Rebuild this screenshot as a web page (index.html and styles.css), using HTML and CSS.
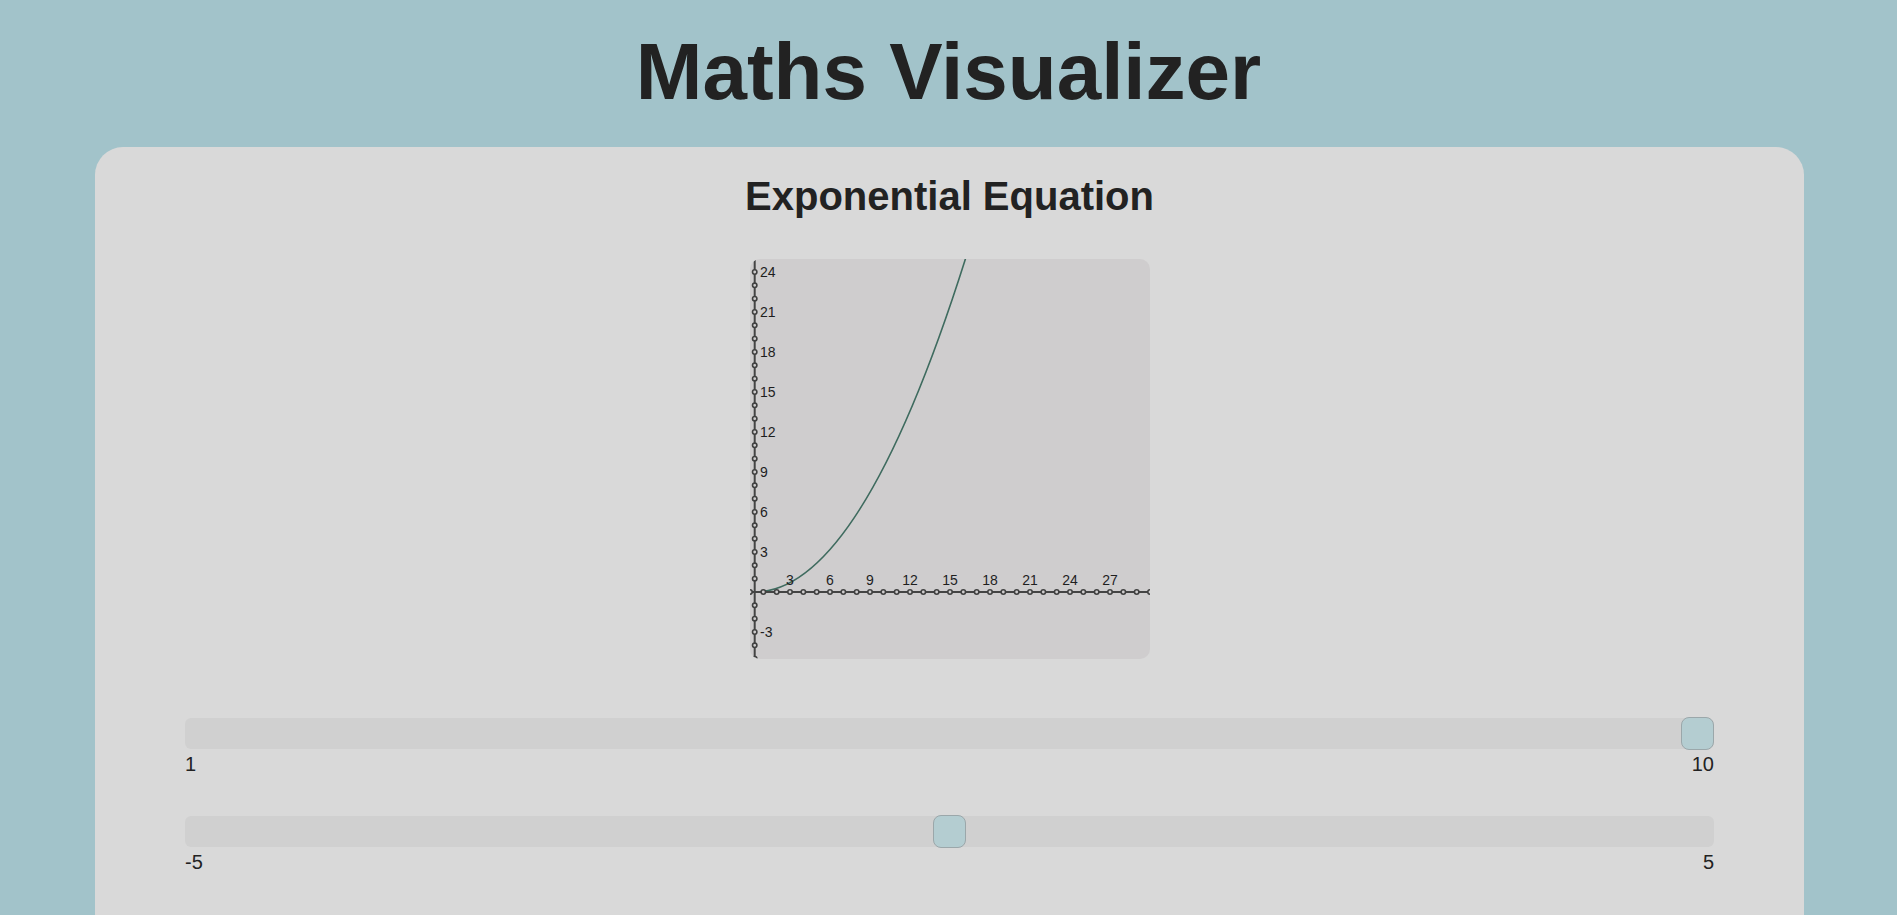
FILE: index.html
```html
<!DOCTYPE html>
<html lang="en">
<head>
<meta charset="utf-8">
<title>Maths Visualizer</title>
<link rel="stylesheet" href="styles.css">
</head>
<body>
<h1 class="title">Maths Visualizer</h1>
<main class="card">
  <h2 class="eq-title">Exponential Equation</h2>
  <div class="graph">
    <svg class="graph-svg" width="400" height="400" viewBox="0 0 400 400">
      <path class="curve" d="M0 333 L4.7 333 Q111.37 333 218.03 -8.33"/>
      <line class="axis" x1="0" y1="333" x2="400" y2="333"/>
      <line class="axis" x1="4.7" y1="0" x2="4.7" y2="400"/>
      <g class="ticks">
        <circle cx="0" cy="333" r="2.2"/><circle cx="13.33" cy="333" r="2.2"/><circle cx="26.67" cy="333" r="2.2"/><circle cx="40" cy="333" r="2.2"/><circle cx="53.33" cy="333" r="2.2"/><circle cx="66.67" cy="333" r="2.2"/><circle cx="80" cy="333" r="2.2"/><circle cx="93.33" cy="333" r="2.2"/><circle cx="106.67" cy="333" r="2.2"/><circle cx="120" cy="333" r="2.2"/><circle cx="133.33" cy="333" r="2.2"/><circle cx="146.67" cy="333" r="2.2"/><circle cx="160" cy="333" r="2.2"/><circle cx="173.33" cy="333" r="2.2"/><circle cx="186.67" cy="333" r="2.2"/><circle cx="200" cy="333" r="2.2"/><circle cx="213.33" cy="333" r="2.2"/><circle cx="226.67" cy="333" r="2.2"/><circle cx="240" cy="333" r="2.2"/><circle cx="253.33" cy="333" r="2.2"/><circle cx="266.67" cy="333" r="2.2"/><circle cx="280" cy="333" r="2.2"/><circle cx="293.33" cy="333" r="2.2"/><circle cx="306.67" cy="333" r="2.2"/><circle cx="320" cy="333" r="2.2"/><circle cx="333.33" cy="333" r="2.2"/><circle cx="346.67" cy="333" r="2.2"/><circle cx="360" cy="333" r="2.2"/><circle cx="373.33" cy="333" r="2.2"/><circle cx="386.67" cy="333" r="2.2"/><circle cx="400" cy="333" r="2.2"/>
        <circle cx="4.7" cy="399.67" r="2.2"/><circle cx="4.7" cy="386.33" r="2.2"/><circle cx="4.7" cy="373" r="2.2"/><circle cx="4.7" cy="359.67" r="2.2"/><circle cx="4.7" cy="346.33" r="2.2"/><circle cx="4.7" cy="319.67" r="2.2"/><circle cx="4.7" cy="306.33" r="2.2"/><circle cx="4.7" cy="293" r="2.2"/><circle cx="4.7" cy="279.67" r="2.2"/><circle cx="4.7" cy="266.33" r="2.2"/><circle cx="4.7" cy="253" r="2.2"/><circle cx="4.7" cy="239.67" r="2.2"/><circle cx="4.7" cy="226.33" r="2.2"/><circle cx="4.7" cy="213" r="2.2"/><circle cx="4.7" cy="199.67" r="2.2"/><circle cx="4.7" cy="186.33" r="2.2"/><circle cx="4.7" cy="173" r="2.2"/><circle cx="4.7" cy="159.67" r="2.2"/><circle cx="4.7" cy="146.33" r="2.2"/><circle cx="4.7" cy="133" r="2.2"/><circle cx="4.7" cy="119.67" r="2.2"/><circle cx="4.7" cy="106.33" r="2.2"/><circle cx="4.7" cy="93" r="2.2"/><circle cx="4.7" cy="79.67" r="2.2"/><circle cx="4.7" cy="66.33" r="2.2"/><circle cx="4.7" cy="53" r="2.2"/><circle cx="4.7" cy="39.67" r="2.2"/><circle cx="4.7" cy="26.33" r="2.2"/><circle cx="4.7" cy="13" r="2.2"/>
      </g>
      <g class="xlabels">
        <text x="40" y="326">3</text><text x="80" y="326">6</text><text x="120" y="326">9</text><text x="160" y="326">12</text><text x="200" y="326">15</text><text x="240" y="326">18</text><text x="280" y="326">21</text><text x="320" y="326">24</text><text x="360" y="326">27</text>
      </g>
      <g class="ylabels">
        <text x="10" y="18">24</text><text x="10" y="58">21</text><text x="10" y="98">18</text><text x="10" y="138">15</text><text x="10" y="178">12</text><text x="10" y="218">9</text><text x="10" y="258">6</text><text x="10" y="298">3</text><text x="10" y="378">-3</text>
      </g>
    </svg>
  </div>

  <div class="control control-first">
    <input class="slider" type="range" min="1" max="10" value="10">
    <div class="range-labels"><span>1</span><span>10</span></div>
  </div>
  <div class="control">
    <input class="slider" type="range" min="-5" max="5" value="0">
    <div class="range-labels"><span>-5</span><span>5</span></div>
  </div>
</main>
</body>
</html>
```

FILE: styles.css
```css
html, body {
  margin: 0;
  padding: 0;
}

body {
  background: #a2c3ca;
  font-family: "Liberation Sans", Arial, sans-serif;
  color: #222222;
}

.title {
  margin: 26px 0 29px;
  font-size: 80px;
  line-height: 92px;
  font-weight: 700;
  text-align: center;
}

.card {
  display: block;
  box-sizing: border-box;
  margin: 0 93px 0 95px;
  padding: 26px 90px 80px;
  background: #d9d9d9;
  border-radius: 28px;
}

.eq-title {
  margin: 0;
  font-size: 40px;
  line-height: 46px;
  font-weight: 700;
  text-align: center;
}

.graph {
  width: 400px;
  height: 400px;
  margin: 40px auto 0;
  background: #cfcdce;
  border-radius: 10px;
  overflow: hidden;
}

.graph-svg {
  display: block;
}

.axis {
  stroke: #444444;
  stroke-width: 2;
}

.ticks circle {
  fill: #cfcdce;
  stroke: #404040;
  stroke-width: 1.6;
}

.curve {
  fill: none;
  stroke: #3f6b5f;
  stroke-width: 1.6;
}

.xlabels text,
.ylabels text {
  font-family: "Liberation Sans", Arial, sans-serif;
  font-size: 14px;
  fill: #1e1e1e;
}

.xlabels text {
  text-anchor: middle;
}

.control {
  margin-top: 40px;
}

.control-first {
  margin-top: 59px;
}

.slider {
  -webkit-appearance: none;
  appearance: none;
  display: block;
  width: 100%;
  height: 31px;
  margin: 0;
  padding: 0;
  background: #d0d0d0;
  border-radius: 6px;
  outline: none;
}

.slider::-webkit-slider-runnable-track {
  height: 31px;
  background: transparent;
  border: none;
}

.slider::-webkit-slider-thumb {
  -webkit-appearance: none;
  appearance: none;
  box-sizing: border-box;
  width: 33px;
  height: 33px;
  margin-top: -1px;
  background: #b4cdd1;
  border: 1px solid #9ba7aa;
  border-radius: 8px;
}

.range-labels {
  display: flex;
  justify-content: space-between;
  margin-top: 4px;
  font-size: 20px;
  line-height: 23px;
}
```
